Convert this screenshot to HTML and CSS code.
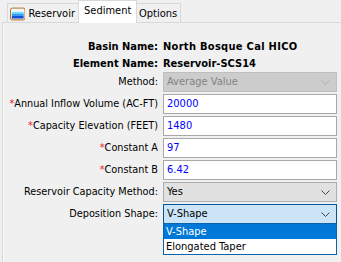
FILE: index.html
```html
<!DOCTYPE html>
<html>
<head>
<meta charset="utf-8">
<link rel="stylesheet" href="styles.css">
</head>
<body>
<div class="tabs">
  <div class="tab first">
    <svg class="ico" width="17" height="14" viewBox="0 0 17 14">
      <rect x="0.5" y="0.5" width="16" height="13" rx="2" fill="#fff4e0" stroke="#a5651d"/>
      <rect x="2" y="2" width="13" height="3" fill="#eaf6ff"/>
      <rect x="2" y="5" width="13" height="2" fill="#5fd3ff"/>
      <rect x="2" y="7" width="13" height="2" fill="#2f9cf5"/>
      <rect x="2" y="9" width="13" height="3" fill="#1550d8"/>
    </svg>
    <span>Reservoir</span>
  </div>
  <div class="tab active"><span>Sediment</span></div>
  <div class="tab"><span>Options</span></div>
</div>
<div class="panel">
  <div class="info">
    <div class="lbl b">Basin Name:</div><div class="b val">North Bosque Cal HICO</div>
    <div class="lbl b">Element Name:</div><div class="b">Reservoir-SCS14</div>
  </div>
  <div class="form">
    <div class="lbl">Method:</div>
    <div class="sel disabled"><span>Average Value</span><svg class="chev" width="9" height="5" viewBox="0 0 9 5"><polyline points="0.5,0.5 4.5,4.5 8.5,0.5" fill="none" stroke="#b0b0b0"/></svg></div>

    <div class="lbl"><i>*</i>Annual Inflow Volume (AC-FT)</div>
    <div class="inp">20000</div>

    <div class="lbl"><i>*</i>Capacity Elevation (FEET)</div>
    <div class="inp">1480</div>

    <div class="lbl"><i>*</i>Constant A</div>
    <div class="inp">97</div>

    <div class="lbl"><i>*</i>Constant B</div>
    <div class="inp">6.42</div>

    <div class="lbl">Reservoir Capacity Method:</div>
    <div class="sel"><span>Yes</span><svg class="chev" width="9" height="5" viewBox="0 0 9 5"><polyline points="0.5,0.5 4.5,4.5 8.5,0.5" fill="none" stroke="#444"/></svg></div>

    <div class="lbl">Deposition Shape:</div>
    <div class="dropwrap">
      <div class="sel open"><span>V-Shape</span><svg class="chev" width="9" height="5" viewBox="0 0 9 5"><polyline points="0.5,0.5 4.5,4.5 8.5,0.5" fill="none" stroke="#444"/></svg></div>
      <div class="list">
        <div class="item hi">V-Shape</div>
        <div class="item">Elongated Taper</div>
      </div>
    </div>
  </div>
</div>
</body>
</html>
```
FILE: styles.css
```css
html, body {
  margin: 0;
  padding: 0;
  background: #f0f0f0;
  overflow: hidden;
}
body {
  width: 341px;
  height: 262px;
  font-family: "DejaVu Sans", sans-serif;
  font-stretch: condensed;
  font-size: 11px;
  color: #000;
}
.tabs {
  display: flex;
  align-items: flex-end;
  height: 22px;
  padding-left: 7px;
  position: relative;
  z-index: 2;
}
.tab {
  height: 19px;
  box-sizing: border-box;
  border: 1px solid #d9d9d9;
  border-bottom: none;
  background: #f0f0f0;
  display: flex;
  align-items: center;
  padding: 0 4px 0 4px;
  margin-left: -1px;
  white-space: nowrap;
}
.tab.first {
  margin-left: 0;
  width: 73px;
  padding-left: 2px;
  gap: 3px;
}
.tab.first .ico { margin-top: 1px; }
.tab.active {
  height: 23px;
  margin-bottom: -1px;
  background: #fff;
  width: 59px;
  padding-left: 5px;
  margin-left: -2px;
  margin-right: -2px;
  position: relative;
  z-index: 3;
  padding-bottom: 3px;
}
.tab:last-child {
  width: 47px;
  padding-left: 4px;
}
.panel {
  margin-left: 2px;
  margin-right: -10px;
  height: 240px;
  border: 1px solid #d9d9d9;
  border-bottom: none;
  box-shadow: inset 1px 0 0 #fbfbfb;
  padding-top: 15px;
  box-sizing: border-box;
}
.info, .form {
  display: grid;
  grid-template-columns: 155px 174px;
  column-gap: 5px;
}
.info {
  line-height: 17px;
}
.b { font-weight: bold; }
.val { letter-spacing: 0.3px; }
.lbl {
  text-align: right;
  white-space: nowrap;
}
.form .lbl {
  font-size: 10.8px;
  line-height: 20px;
}
.lbl i {
  font-style: normal;
  color: #e8212b;
}
.form {
  row-gap: 2px;
}
.inp, .sel {
  height: 20px;
  box-sizing: border-box;
  border: 1px solid #a8a8a8;
  background: #fff;
  color: #0000ff;
  padding-left: 3px;
  line-height: 18px;
  white-space: nowrap;
}
.sel {
  display: flex;
  align-items: center;
  justify-content: space-between;
  background: #e1e1e1;
  border-color: #adadad;
  color: #000;
  padding-right: 6px;
}
.sel.disabled {
  background: #cccccc;
  border-color: #bfbfbf;
  color: #838383;
}
.sel.open {
  background: #cce4f7;
  border-color: #005499;
}
.dropwrap {
  position: relative;
}
.list {
  position: absolute;
  left: 0;
  right: 0;
  top: 19px;
  border: 1px solid #0a64ad;
  background: #fff;
  z-index: 5;
}
.item {
  height: 15px;
  line-height: 15px;
  padding-left: 2px;
  white-space: nowrap;
}
.item.hi {
  background: #0078d7;
  color: #fff;
}
```
